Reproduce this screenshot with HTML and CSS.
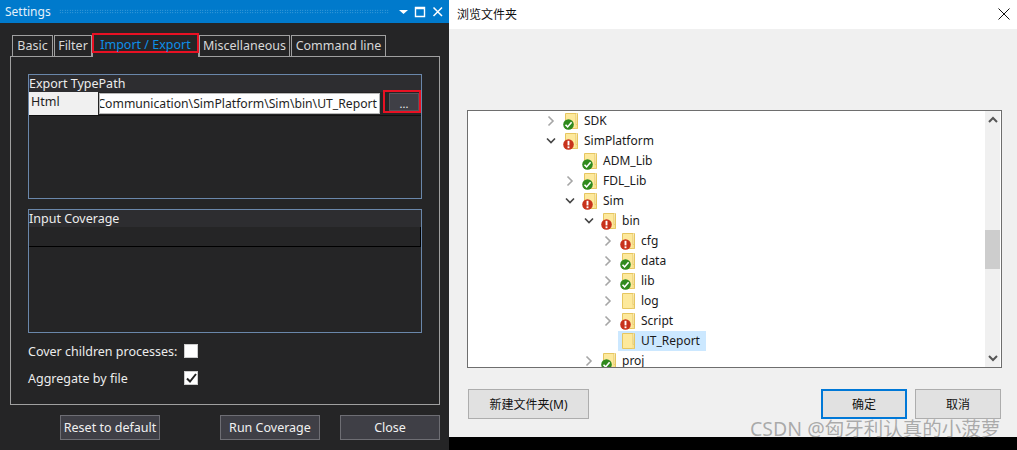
FILE: index.html
```html
<!DOCTYPE html>
<html lang="en">
<head>
<meta charset="utf-8">
<title>Settings</title>
<link rel="stylesheet" href="styles.css">
</head>
<body>
<svg class="defs" width="0" height="0" aria-hidden="true">
  <symbol id="folder" viewBox="0 0 13 16">
    <path d="M.5 .5H11V11.5H12.5V15.5H.5Z" fill="#fde99c" stroke="#e6c660"/>
    <path d="M11 2V15.5" stroke="#f2d987" stroke-width="1"/>
    <path d="M11.5 .5H12.5V15.5" fill="#fff6d2" stroke="#e6c660"/>
  </symbol>
  <symbol id="ok" viewBox="0 0 11 11">
    <circle cx="5.5" cy="5.5" r="5.3" fill="#2f8a1d"/>
    <path d="M2.5 5.7 4.6 7.9 8.6 3.2" fill="none" stroke="#fff" stroke-width="1.6"/>
  </symbol>
  <symbol id="err" viewBox="0 0 11 11">
    <circle cx="5.5" cy="5.5" r="5.3" fill="#c8321c"/>
    <path d="M5.5 1.8V6.4" stroke="#fff" stroke-width="1.9"/>
    <path d="M5.5 7.4V9.2" stroke="#fff" stroke-width="1.9"/>
  </symbol>
  <symbol id="right" viewBox="0 0 10 12"><path d="M2.5 1.5 7 6 2.5 10.5" fill="none" stroke="#a6a6a6" stroke-width="1.6"/></symbol>
  <symbol id="down" viewBox="0 0 10 12"><path d="M1 3.5 5 7.5 9 3.5" fill="none" stroke="#444" stroke-width="1.6"/></symbol>
</svg>

<div class="screen">
  <section class="settings">
    <header class="titlebar">
      <span class="title">Settings</span>
      <span class="grip"></span>
      <svg class="winicon" width="50" height="14" viewBox="0 0 50 14">
        <path d="M1 5H10L5.5 9Z" fill="#fff"/>
        <path d="M17.5 2.5H26.5V11.5H17.5Z M17.5 3.5H26.5" fill="none" stroke="#fff" stroke-width="1.4"/>
        <path d="M35.5 2.5 44 11M44 2.5 35.5 11" stroke="#fff" stroke-width="1.5"/>
      </svg>
    </header>
    <div class="body">
      <nav class="tabs">
        <span class="tab t1">Basic</span>
        <span class="tab t2">Filter</span>
        <span class="tab active"><span class="active-mark">Import / Export</span></span>
        <span class="tab t3">Miscellaneous</span>
        <span class="tab t4">Command line</span>
      </nav>
      <div class="panel">
        <div class="group group-export">
          <div class="group-head">Export TypePath</div>
          <div class="export-row">
            <div class="cell-type">Html</div>
            <div class="cell-path"><span>Communication\SimPlatform\Sim\bin\UT_Report</span></div>
            <div class="browse"><span>...</span></div>
          </div>
        </div>
        <div class="group group-input">
          <div class="group-head">Input Coverage</div>
          <div class="input-row"></div>
        </div>
        <div class="check-row first"><span class="check-label">Cover children processes:</span><span class="check"></span></div>
        <div class="check-row"><span class="check-label">Aggregate by file</span>
          <span class="check"><svg width="11" height="10" viewBox="0 0 11 10"><path d="M1 5.5 4 8.5 10 1" fill="none" stroke="#222" stroke-width="2"/></svg></span></div>
      </div>
      <footer class="actions">
        <button class="btn reset">Reset to default</button>
        <button class="btn run">Run Coverage</button>
        <button class="btn">Close</button>
      </footer>
    </div>
  </section>

  <section class="browser">
    <div class="dialog">
      <header class="dlg-head">
        <span class="dlg-title">浏览文件夹</span>
        <svg width="12" height="12" viewBox="0 0 12 12"><path d="M.5 .5 11.5 11.5M11.5 .5 .5 11.5" stroke="#111" stroke-width="1"/></svg>
      </header>
      <div class="dlg-body">
        <div class="tree">
          <div class="rows">
            <div class="row d0"><svg class="arrow"><use href="#right"/></svg><span class="ic"><svg class="fold"><use href="#folder"/></svg><svg class="badge"><use href="#ok"/></svg></span><span class="name">SDK</span></div>
            <div class="row d0"><svg class="arrow"><use href="#down"/></svg><span class="ic"><svg class="fold"><use href="#folder"/></svg><svg class="badge"><use href="#err"/></svg></span><span class="name">SimPlatform</span></div>
            <div class="row d1"><span class="arrow"></span><span class="ic"><svg class="fold"><use href="#folder"/></svg><svg class="badge"><use href="#ok"/></svg></span><span class="name">ADM_Lib</span></div>
            <div class="row d1"><svg class="arrow"><use href="#right"/></svg><span class="ic"><svg class="fold"><use href="#folder"/></svg><svg class="badge"><use href="#ok"/></svg></span><span class="name">FDL_Lib</span></div>
            <div class="row d1"><svg class="arrow"><use href="#down"/></svg><span class="ic"><svg class="fold"><use href="#folder"/></svg><svg class="badge"><use href="#err"/></svg></span><span class="name">Sim</span></div>
            <div class="row d2"><svg class="arrow"><use href="#down"/></svg><span class="ic"><svg class="fold"><use href="#folder"/></svg><svg class="badge"><use href="#err"/></svg></span><span class="name">bin</span></div>
            <div class="row d3"><svg class="arrow"><use href="#right"/></svg><span class="ic"><svg class="fold"><use href="#folder"/></svg><svg class="badge"><use href="#err"/></svg></span><span class="name">cfg</span></div>
            <div class="row d3"><svg class="arrow"><use href="#right"/></svg><span class="ic"><svg class="fold"><use href="#folder"/></svg><svg class="badge"><use href="#ok"/></svg></span><span class="name">data</span></div>
            <div class="row d3"><svg class="arrow"><use href="#right"/></svg><span class="ic"><svg class="fold"><use href="#folder"/></svg><svg class="badge"><use href="#ok"/></svg></span><span class="name">lib</span></div>
            <div class="row d3"><svg class="arrow"><use href="#right"/></svg><span class="ic"><svg class="fold"><use href="#folder"/></svg></span><span class="name">log</span></div>
            <div class="row d3"><svg class="arrow"><use href="#right"/></svg><span class="ic"><svg class="fold"><use href="#folder"/></svg><svg class="badge"><use href="#err"/></svg></span><span class="name">Script</span></div>
            <div class="row d3"><span class="arrow"></span><span class="sel"><span class="ic"><svg class="fold"><use href="#folder"/></svg></span><span class="name">UT_Report</span></span></div>
            <div class="row d2"><svg class="arrow"><use href="#right"/></svg><span class="ic"><svg class="fold"><use href="#folder"/></svg><svg class="badge"><use href="#ok"/></svg></span><span class="name">proj</span></div>
          </div>
          <div class="scroll">
            <svg width="10" height="8" viewBox="0 0 10 8"><path d="M1 6 5 2 9 6" fill="none" stroke="#555" stroke-width="2"/></svg>
            <span class="thumb"></span>
            <svg width="10" height="8" viewBox="0 0 10 8"><path d="M1 2 5 6 9 2" fill="none" stroke="#555" stroke-width="2"/></svg>
          </div>
        </div>
        <div class="dlg-actions">
          <button class="wbtn newf">新建文件夹(M)</button>
          <span class="spacer"></span>
          <button class="wbtn primary">确定</button>
          <button class="wbtn">取消</button>
        </div>
      </div>
    </div>
    <div class="taskstrip"></div>
    <span class="watermark">CSDN @匈牙利认真的小菠萝</span>
  </section>
</div>
</body>
</html>
```
FILE: styles.css
```css
* { box-sizing: border-box; }
html, body { margin: 0; padding: 0; }
body { width: 1017px; height: 450px; overflow: hidden; background: #000; font-family: "Noto Sans", "Noto Sans CJK SC", sans-serif; }
.defs { display: block; height: 0; }
button { font-family: inherit; padding: 0; cursor: default; }

.screen { display: flex; width: 1017px; height: 450px; }

.settings { width: 449px; height: 450px; background: #252526; color: #f1f1f1; font-size: 12.5px; flex: none; }
.titlebar { height: 23px; background: #007acc; display: flex; align-items: center; padding: 0 1px 0 5px; }
.title { font-size: 12px; color: #e4f1fa; }
.grip { flex: 1; height: 5px; margin: 0 9px 0 8px; background-image: radial-gradient(#5aaee0 .6px, transparent .7px); background-size: 2.5px 2.5px; }
.winicon { flex: none; }

.body { padding: 12px 9px 0 10px; }
.tabs { display: flex; align-items: flex-end; height: 21px; padding-left: 2px; }
.tab { height: 21px; border: 1px solid #a0a0a0; border-bottom: 0; line-height: 19px; text-align: center; color: #d8d8d8; font-size: 12.5px; white-space: nowrap; margin-right: 1px; }
.t1 { width: 41px; }
.t2 { width: 38px; margin-right: 0; }
.active { width: 107px; height: 24px; margin: 0 0 -1px; background: #252526; position: relative; z-index: 1; }
.active-mark { display: block; height: 20px; margin: -1px -1px 0; border: 2px solid #e81123; line-height: 19px; color: #0e8fe8; }
.t3 { width: 91px; }
.t4 { width: 95px; }

.panel { width: 430px; height: 349px; border: 1px solid #a0a0a0; padding: 17px 17px 0 17px; }
.group { width: 394px; border: 1px solid #6a87aa; }
.group-export { height: 125px; }
.group-input { height: 124px; margin-top: 10px; }
.group-head { height: 17px; line-height: 18px; font-size: 12.5px; background: #2d2d30; color: #ececec; white-space: nowrap; }
.input-row { height: 20px; border-right: 1px solid #000; border-bottom: 1px solid #000; }
.export-row { display: flex; height: 24px; position: relative; border-bottom: 1px solid #111; }
.cell-type { width: 70px; height: 23px; background: #f0f0f0; color: #1e1e1e; line-height: 20px; padding-left: 2px; border-right: 1px solid #222; font-size: 12.5px; }
.cell-path { width: 281px; height: 21px; background: #fff; border: 1px solid #b8b8b8; color: #1e1e1e; overflow: hidden; line-height: 20px; font-size: 12.2px; direction: rtl; text-align: left; white-space: nowrap; padding: 0 2px 0 0; margin-top: 1px; }
.cell-path span { direction: ltr; unicode-bidi: bidi-override; display: inline-block; }
.browse { position: absolute; left: 354px; top: -2px; width: 38px; height: 23px; border: 2px solid #e81123; background: #252526; padding: 1px 0 0 4px; }
.browse span { display: block; height: 18px; background: #3f3f46; color: #f1f1f1; font-size: 11px; line-height: 20px; text-align: center; border: 1px solid #55555c; }

.check-row { display: flex; align-items: center; height: 14px; margin-top: 13px; }
.check-row.first { margin-top: 11px; }
.check-label { width: 156px; font-size: 12.5px; color: #ececec; white-space: nowrap; }
.check { width: 14px; height: 14px; background: #fff; border: 1px solid #ccc; display: flex; align-items: center; justify-content: center; }

.actions { display: flex; margin-top: 10px; padding-left: 50px; gap: 20px; }
.btn { width: 100px; height: 25px; background: #3f3f46; border: 1px solid #6e6e74; color: #f1f1f1; font-size: 12.5px; }
.btn.reset { margin-right: 40px; }

.browser { width: 568px; height: 450px; position: relative; display: flex; flex-direction: column; flex: none; }
.dialog { height: 437px; background: #f0f0f0; display: flex; flex-direction: column; }
.dlg-head { height: 29px; background: #fff; display: flex; align-items: center; justify-content: space-between; padding: 0 7px 2px 8px; }
.dlg-title { font-size: 12px; color: #111; }
.dlg-body { flex: 1; padding: 81px 15px 0 18px; }
.tree { width: 535px; height: 258px; background: #fff; border: 1px solid #6e6e6e; display: flex; overflow: hidden; }
.rows { flex: 1; overflow: hidden; }
.row { display: flex; align-items: center; height: 20px; font-size: 12px; color: #1a1a1a; }
.d0 { padding-left: 78px; }
.d1 { padding-left: 97px; }
.d2 { padding-left: 116px; }
.d3 { padding-left: 135px; }
.arrow { width: 10px; height: 12px; flex: none; margin-right: 7px; }
.ic { width: 15px; height: 20px; position: relative; flex: none; margin-right: 6px; display: block; }
.fold { width: 13px; height: 16px; position: absolute; right: 0; top: 2px; display: block; }
.badge { width: 11px; height: 11px; position: absolute; left: 0; top: 8px; display: block; }
.name { white-space: nowrap; position: relative; top: -1px; }
.sel { display: flex; align-items: center; height: 20px; width: 88px; background: #cce8ff; margin-left: -2px; padding-left: 2px; }
.scroll { width: 15px; margin-right: 1px; height: 100%; background: #f0f0f0; display: flex; flex-direction: column; align-items: center; justify-content: space-between; padding: 5px 0; position: relative; flex: none; }
.thumb { position: absolute; left: 0; top: 119px; width: 15px; height: 39px; background: #cdcdcd; }
.dlg-actions { display: flex; margin-top: 21px; gap: 8px; width: 534px; padding-left: 1px; align-items: center; }
.spacer { flex: 1; }
.wbtn { width: 86px; height: 30px; background: #e1e1e1; border: 1px solid #adadad; font-size: 12px; color: #111; }
.wbtn.newf { width: 121px; }
.wbtn.primary { border: 2px solid #0078d7; }
.taskstrip { height: 13px; background: #000; }
.watermark { position: absolute; left: 301px; top: 416px; font-size: 19.5px; line-height: 26px; color: rgba(110,110,110,.55); white-space: nowrap; }
```
